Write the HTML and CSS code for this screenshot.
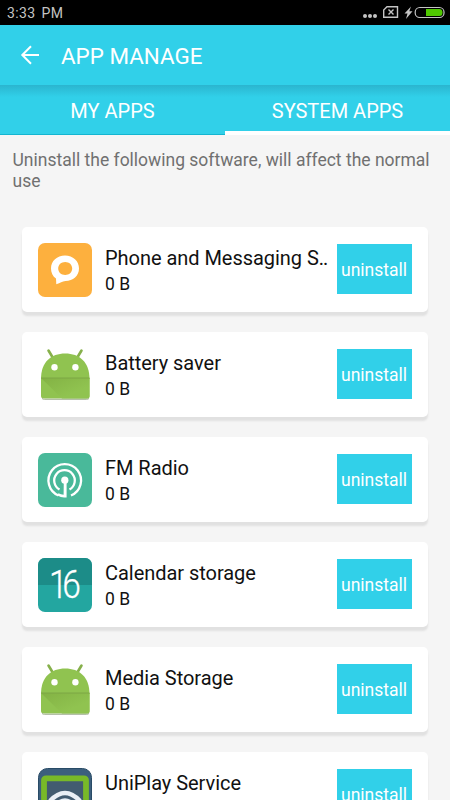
FILE: index.html
```
<!DOCTYPE html>
<html lang="en">

<head>
    <meta charset="UTF-8">
    <meta name="viewport" content="width=device-width, initial-scale=1.0">
    <title>App Manage</title>
    <link rel="stylesheet" href="styles.css">
</head>

<body>
    <div class="status">
        <span class="time">3:33 PM</span>
        <svg class="status-icons" width="84" height="25" viewBox="0 0 84 25">
            <g fill="#c4c4c4">
                <circle cx="3" cy="16" r="2" />
                <circle cx="8" cy="16" r="2" />
                <circle cx="13" cy="16" r="2" />
                <path d="M49 6.500l-6.500 7h3l-1.500 5.500 6.500-7.800h-3.200z" />
            </g>
            <path d="M25 6.700h10.500v10.600H21.700V10z" fill="none" stroke="#c4c4c4" stroke-width="1.400" />
            <path d="M26.500 9.500l5 5M31.500 9.500l-5 5" stroke="#c4c4c4" stroke-width="1.400" />
            <rect x="53.200" y="7.500" width="28.800" height="10" rx="4.600" fill="none" stroke="#c4c4c4" stroke-width="1.200" />
            <path d="M64 9h13.500q3 0 3 3.500t-3 3.500H64z" fill="#4fc800" />
        </svg>
    </div>
    <header class="toolbar">
        <svg class="back" width="20" height="20" viewBox="0 0 20 20" fill="none" stroke="#fff" stroke-width="2">
            <path d="M19 10H3M11 1.300L2.300 10l8.700 8.700" />
        </svg>
        <h1>APP MANAGE</h1>
    </header>
    <nav class="tabs">
        <div class="tab">MY APPS</div>
        <div class="tab active">SYSTEM APPS</div>
    </nav>
    <p class="warning">Uninstall the following software, will affect the normal use</p>
    <!-- default android icon, used by several apps -->
    <svg class="defs">
        <linearGradient id="fold" x1="0" y1="0" x2="1" y2="1">
            <stop offset="0" stop-color="#83b244" />
            <stop offset="0.7" stop-color="#90c350" />
        </linearGradient>
        <symbol id="android" viewBox="0 0 54 54">
            <path d="M10.500 2.500l4.500 7.500M43.500 2.500l-4.500 7.500" stroke="#86b04b" stroke-width="2.600" stroke-linecap="round" />
            <path d="M3 31C3 14 13 5.500 27.200 5.500S51.500 14 51.500 31z" fill="#90c350" />
            <path d="M3 30h48.500v18q0 2.500-2.500 2.500h-43q-3 0-3-2.500z" fill="#90c350" />
            <path d="M3 30h48.500v18q0 2.500-2.500 2.500H24z" fill="url(#fold)" />
            <path d="M3 30h48.500" stroke="#7da645" stroke-width="1" />
            <path d="M4 50.500q1 .8 2.500.8h42q1.500 0 2.500-.8" stroke="#8a9c77" stroke-width=".8" fill="none" />
            <circle cx="16.500" cy="19.300" r="3.200" fill="#fff" />
            <circle cx="37.400" cy="19.300" r="3.200" fill="#fff" />
        </symbol>
    </svg>
    <main class="list">
        <div class="card">
            <svg class="icon" viewBox="0 0 54 54">
                <rect width="54" height="54" rx="7" fill="#fdb03e" />
                <path fill="#fff" fill-rule="evenodd" d="M27 12.500c8 0 14 5.500 14 13s-6 12.500-13.500 12.500c-3.500.2-5 1.800-9.200 3.200l-.3-5.600c-3.200-2.300-5-6-5-10.100 0-7.500 6-13 14-13zM27.200 19c-4 0-7 2.800-7 6.500s3 6.500 7 6.500 7-2.800 7-6.500-3-6.500-7-6.500z" />
            </svg>
            <div class="info">
                <div class="name">Phone and Messaging S<span class="dots">..</span></div>
                <div class="size">0 B</div>
            </div>
            <button class="uninstall">uninstall</button>
        </div>
        <div class="card">
            <svg class="icon"><use href="#android" /></svg>
            <div class="info">
                <div class="name">Battery saver</div>
                <div class="size">0 B</div>
            </div>
            <button class="uninstall">uninstall</button>
        </div>
        <div class="card">
            <svg class="icon" viewBox="0 0 54 54">
                <rect width="54" height="54" rx="7" fill="#49b99a" />
                <g fill="none" stroke="#fff" stroke-width="2.300">
                    <path d="M20.500 42.500A16.300 16.300 0 1 1 33 42.500" />
                    <path d="M21.500 36.500A10.300 10.300 0 1 1 31.500 36.500" />
                </g>
                <circle cx="26.800" cy="27.200" r="3.600" fill="#fff" />
                <path d="M25.800 28h2.800v16.500h-2.500q-3.500-.2-6.500-2l.8-2.300q2.500 1.300 5.200 1.600z" fill="#fff" />
            </svg>
            <div class="info">
                <div class="name">FM Radio</div>
                <div class="size">0 B</div>
            </div>
            <button class="uninstall">uninstall</button>
        </div>
        <div class="card">
            <svg class="icon" viewBox="0 0 54 54">
                <rect width="54" height="54" rx="7" fill="#23a6a0" />
                <path d="M0 27V7a7 7 0 0 1 7-7h40a7 7 0 0 1 7 7v20z" fill="#1c8c88" />
                <text class="day" transform="scale(0.88 1)" x="12.500 27.500" y="40.500">16</text>
            </svg>
            <div class="info">
                <div class="name">Calendar storage</div>
                <div class="size">0 B</div>
            </div>
            <button class="uninstall">uninstall</button>
        </div>
        <div class="card">
            <svg class="icon"><use href="#android" /></svg>
            <div class="info">
                <div class="name">Media Storage</div>
                <div class="size">0 B</div>
            </div>
            <button class="uninstall">uninstall</button>
        </div>
        <div class="card">
            <svg class="icon" viewBox="0 0 54 54">
                <rect x=".5" y=".5" width="53" height="53" rx="9" fill="#3c5f7d" stroke="#294b66" />
                <rect x="6" y="10.300" width="42" height="40" rx="2" fill="#425b70" stroke="#78b928" stroke-width="5.800" />
                <path d="M12 33q15-16 30 0" fill="none" stroke="#e9eef5" stroke-width="4.500" />
                <path d="M18 36q9-9 18 0" fill="none" stroke="#e9eef5" stroke-width="2.500" />
            </svg>
            <div class="info">
                <div class="name">UniPlay Service</div>
                <div class="size">0 B</div>
            </div>
            <button class="uninstall">uninstall</button>
        </div>
    </main>
</body>

</html>
```
FILE: styles.css
```
* {
    box-sizing: border-box;
}

body {
    margin: 0;
    height: 800px;
    overflow: hidden;
    background-color: #f5f5f5;
    font-family: Roboto, "Liberation Sans", sans-serif;
}

.status {
    height: 25px;
    padding: 0 4px 0 7px;
    display: flex;
    align-items: center;
    justify-content: space-between;
    background-color: #000;
    color: #c4c4c4;
}

.time {
    font-size: 14px;
    letter-spacing: 0.4px;
    word-spacing: 2px;
    padding-top: 1px;
}

.toolbar {
    height: 60px;
    padding-left: 20px;
    display: flex;
    align-items: center;
    gap: 21px;
    background-color: #31d0e9;
    color: #fff;
}

.toolbar h1 {
    margin: 0;
    padding-top: 2px;
    font-size: 22.400px;
    font-weight: 400;
}

.tabs {
    height: 50px;
    display: flex;
    background: linear-gradient(#2bb5cf, #31d0e9 12px);
    color: #fff;
}

.tab {
    flex: 1;
    padding-top: 2px;
    line-height: 48px;
    text-align: center;
    font-size: 20px;
    border-bottom: 1px solid #14b5d0;
}

.active {
    border-bottom: 4px solid #fff;
}

.warning {
    margin: 0;
    padding: 15px 12px 0 12.500px;
    height: 92px;
    font-size: 17.500px;
    line-height: 21px;
    color: #707070;
}

.defs {
    display: block;
    width: 0;
    height: 0;
}

.list {
    padding: 0 22px;
    display: flex;
    flex-direction: column;
    gap: 20px;
}

.card {
    height: 85px;
    flex: none;
    padding: 0 16.500px 1px 16px;
    display: flex;
    align-items: center;
    background-color: #fff;
    border-radius: 5px;
    box-shadow: 0 4px 2px #e1e1e1;
}

.icon {
    width: 54px;
    height: 54px;
    flex: none;
    margin-top: 1px;
}

.day {
    font-family: Roboto, sans-serif;
    font-size: 38px;
    font-weight: 300;
    fill: #fff;
    stroke: #fff;
    stroke-width: 0.3px;
}

.info {
    flex: 1;
    padding: 2px 0 0 13px;
    color: #111;
    white-space: nowrap;
}

.name {
    font-size: 20px;
    line-height: 26px;
    letter-spacing: -0.04px;
}

.dots {
    letter-spacing: -1px;
}

.size {
    padding-top: 1px;
    font-size: 17.500px;
    line-height: 24px;
}

.uninstall {
    width: 75px;
    height: 50px;
    padding: 2px 0 0;
    border: 0;
    background-color: #31d0e9;
    color: #fff;
    font-family: inherit;
    font-size: 17.500px;
}
```
